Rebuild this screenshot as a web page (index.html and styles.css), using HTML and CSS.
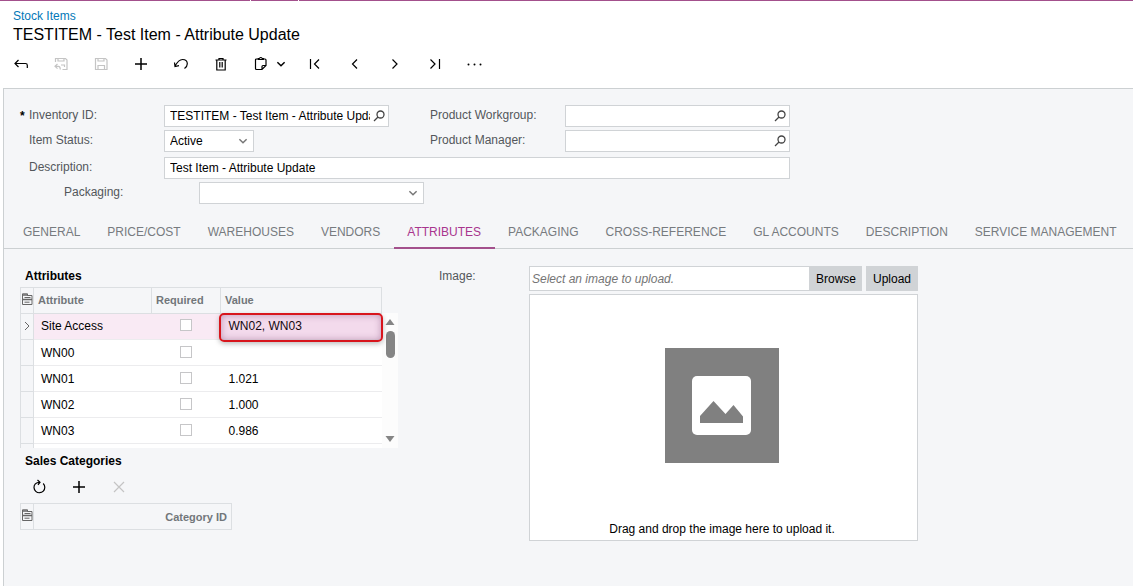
FILE: index.html
```html
<!DOCTYPE html>
<html lang="en">
<head>
  <meta charset="UTF-8" />
  <meta name="viewport" content="width=device-width, initial-scale=1.0" />
  <title>Stock Items</title>
  <link rel="stylesheet" href="styles.css">
</head>
<body>

<!-- shared icons -->
<svg class="sprite" aria-hidden="true">
  <symbol id="lookup" viewBox="0 0 12 12"><circle cx="7.500" cy="4.500" r="3.500" /><path d="M5 7L1 11" /></symbol>
  <symbol id="down" viewBox="0 0 10 10"><path d="M2 3.500l3 3 3-3" /></symbol>
  <symbol id="plus" viewBox="0 0 16 16"><path d="M8 2v12M2 8h12" /></symbol>
  <symbol id="settings" viewBox="0 0 12 12"><path d="M1.500 11.500V.8h5v1.700h4.500v9z" /><path stroke-width="1.600" d="M1.500 2h5.500M2 6.500h9" /><path d="M3.500 4.500h6M3.500 9.200h5" /></symbol>
</svg>

<div class="top-bar"><span></span><span></span><span></span></div>

<header>
  <a class="crumb" href="#">Stock Items</a>
  <h1>TESTITEM - Test Item - Attribute Update</h1>
  <div class="toolbar">
    <button class="tool" aria-label="Back"><svg viewBox="0 0 16 16"><path d="M5.500 4L2 7.500 5.500 11M2 7.500h10.500q1.800 0 1.800 1.800V12" /></svg></button>
    <button class="tool" aria-label="Save and close" disabled><svg viewBox="0 0 16 16"><path d="M2.500 6V2.500h10L14 4v9.500H9.500M5 2.500V5h6V2.500M8 9h3.500v2M4.500 8L2 10.300l2.500 2.300M2 10.300h3.500q1.800 0 1.800 3.200" /></svg></button>
    <button class="tool" aria-label="Save" disabled><svg viewBox="0 0 16 16"><path d="M2.500 2.500h10L14 4v9.500H2.500zM5 2.500V5h6V2.500M5 13.500v-4h6.500v4" /></svg></button>
    <button class="tool add" aria-label="Add"><svg viewBox="0 0 16 16"><use href="#plus" /></svg></button>
    <button class="tool" aria-label="Undo"><svg viewBox="0 0 16 16"><path d="M1.500 6.500l.5 4 4-.8M2 10.300C4 6.500 6.500 3.500 9.500 3.500c3 0 4.800 2 4.800 4.300 0 2-1 3.500-2.800 4.700" /></svg></button>
    <button class="tool" aria-label="Delete"><svg viewBox="0 0 16 16"><path d="M2.500 4h11M6 4V2.500h4V4M3.800 4v10h8.400V4M6.800 6v5.500M9.200 6v5.500" /></svg></button>
    <button class="tool" aria-label="Clipboard"><svg viewBox="0 0 16 16"><path d="M5 3H3.500q-1 0-1 1v8.500q0 1 1 1H9l4-4V4q0-1-1-1h-1.500M5.300 3.500V2.500h1q1.500-2 3 0h1v1zM9 13.500v-3q0-1 1-1h3" /></svg></button>
    <button class="tool narrow" aria-label="Clipboard menu"><svg viewBox="0 0 10 10"><use href="#down" /></svg></button>
    <button class="tool" aria-label="First"><svg viewBox="0 0 16 16"><path d="M3.500 3v10M12 3.500L7.500 8l4.500 4.500" /></svg></button>
    <button class="tool" aria-label="Previous"><svg viewBox="0 0 16 16"><path d="M10 3.500L5.500 8l4.500 4.500" /></svg></button>
    <button class="tool" aria-label="Next"><svg viewBox="0 0 16 16"><path d="M5.500 3.500L10 8l-4.500 4.500" /></svg></button>
    <button class="tool" aria-label="Last"><svg viewBox="0 0 16 16"><path d="M3.500 3.500L8 8l-4.500 4.500M12.500 3v10" /></svg></button>
    <button class="tool" aria-label="More"><svg class="dots" viewBox="0 0 16 16"><circle cx="1.500" cy="8.500" r="1" /><circle cx="7.500" cy="8.500" r="1" /><circle cx="13.500" cy="8.500" r="1" /></svg></button>
  </div>
</header>

<main>
  <form class="summary">
    <label class="required" for="inventory">Inventory ID:</label>
    <div class="field">
      <input id="inventory" type="text" value="TESTITEM - Test Item - Attribute Update">
      <svg class="lookup"><use href="#lookup" /></svg>
    </div>
    <label class="second" for="workgroup">Product Workgroup:</label>
    <div class="field">
      <input id="workgroup" type="text">
      <svg class="lookup"><use href="#lookup" /></svg>
    </div>

    <label for="status">Item Status:</label>
    <div class="field short">
      <select id="status"><option>Active</option></select>
      <svg class="arrow"><use href="#down" /></svg>
    </div>
    <label class="second" for="manager">Product Manager:</label>
    <div class="field">
      <input id="manager" type="text">
      <svg class="lookup"><use href="#lookup" /></svg>
    </div>

    <label class="spaced" for="description">Description:</label>
    <div class="field wide spaced">
      <input id="description" type="text" value="Test Item - Attribute Update">
    </div>

    <div class="packaging">
      <label for="packaging">Packaging:</label>
      <div class="field">
        <select id="packaging"><option></option></select>
        <svg class="arrow"><use href="#down" /></svg>
      </div>
    </div>
  </form>

  <nav class="tabs">
    <a href="#">GENERAL</a>
    <a href="#">PRICE/COST</a>
    <a href="#">WAREHOUSES</a>
    <a href="#">VENDORS</a>
    <a href="#" class="active">ATTRIBUTES</a>
    <a href="#">PACKAGING</a>
    <a href="#">CROSS-REFERENCE</a>
    <a href="#">GL ACCOUNTS</a>
    <a href="#">DESCRIPTION</a>
    <a href="#">SERVICE MANAGEMENT</a>
  </nav>

  <div class="content">
    <section class="left">
      <h2>Attributes</h2>
      <div class="grid-box">
        <table class="grid">
          <colgroup><col class="c-sel"><col class="c-attr"><col class="c-req"><col class="c-val"></colgroup>
          <thead>
            <tr><th><svg class="settings"><use href="#settings" /></svg></th><th>Attribute</th><th>Required</th><th>Value</th></tr>
          </thead>
          <tbody>
            <tr class="selected">
              <td><svg class="current" viewBox="0 0 12 12"><path d="M4 2l4 4-4 4" /></svg></td>
              <td>Site Access</td>
              <td><input type="checkbox" aria-label="Site Access required"></td>
              <td class="marked">WN02, WN03</td>
            </tr>
            <tr><td></td><td>WN00</td><td><input type="checkbox" aria-label="WN00 required"></td><td></td></tr>
            <tr><td></td><td>WN01</td><td><input type="checkbox" aria-label="WN01 required"></td><td>1.021</td></tr>
            <tr><td></td><td>WN02</td><td><input type="checkbox" aria-label="WN02 required"></td><td>1.000</td></tr>
            <tr><td></td><td>WN03</td><td><input type="checkbox" aria-label="WN03 required"></td><td>0.986</td></tr>
            <tr><td></td><td></td><td></td><td></td></tr>
          </tbody>
        </table>
        <div class="scrollbar">
          <svg viewBox="0 0 10 8"><path d="M5 1l4.500 6h-9z" /></svg>
          <div class="thumb"></div>
          <svg viewBox="0 0 10 8"><path d="M5 7L.5 1h9z" /></svg>
        </div>
      </div>

      <h2>Sales Categories</h2>
      <div class="toolbar small">
        <button class="tool" aria-label="Refresh"><svg viewBox="0 0 16 16"><path d="M12.200 4.500A5.400 5.400 0 1 1 4.300 4.800Q5.800 3.300 8.800 3.300M6.500 1l2.500 2.300L7 5.800" /></svg></button>
        <button class="tool add" aria-label="Add category"><svg viewBox="0 0 16 16"><use href="#plus" /></svg></button>
        <button class="tool" aria-label="Remove category" disabled><svg viewBox="0 0 16 16"><path d="M3 3l10 10M13 3L3 13" /></svg></button>
      </div>
      <table class="grid categories">
        <colgroup><col class="c-sel"><col></colgroup>
        <thead>
          <tr><th><svg class="settings"><use href="#settings" /></svg></th><th>Category ID</th></tr>
        </thead>
      </table>
    </section>

    <section class="right">
      <label for="image">Image:</label>
      <div class="uploader">
        <div class="upload-row">
          <input id="image" type="text" placeholder="Select an image to upload.">
          <button class="btn">Browse</button>
          <button class="btn upload">Upload</button>
        </div>
        <div class="drop-area">
          <svg class="placeholder" viewBox="0 0 114 115">
            <rect width="114" height="115" fill="#808080" />
            <rect x="27" y="28" width="59" height="59" rx="5" fill="#fff" />
            <path d="M35 75V68L48.500 53 60.500 66 68.500 57 78 68.500V75z" fill="#808080" />
          </svg>
          <p>Drag and drop the image here to upload it.</p>
        </div>
      </div>
    </section>
  </div>
</main>

</body>
</html>
```
FILE: styles.css
```css
* {
  box-sizing: border-box;
}

body {
  margin: 0;
  min-height: 100vh;
  display: flex;
  flex-direction: column;
  background: #fff;
  color: #000;
  font-family: "Liberation Sans", Arial, sans-serif;
  font-size: 12px;
  line-height: 16px;
}

svg {
  fill: none;
  stroke: currentColor;
  flex: none;
}

button,
input,
select {
  font: inherit;
  color: inherit;
  margin: 0;
  border: none;
  background: none;
}

.sprite {
  display: none;
}

.top-bar {
  display: flex;
  gap: 1px;
  height: 1px;
}

.top-bar span {
  background: #a3508c;
  width: 47px;
}

.top-bar span:first-child {
  width: 250px;
}

.top-bar span:last-child {
  flex: 1;
}

header {
  padding: 7px 0 12px 13px;
}

.crumb {
  display: block;
  color: #0278b8;
  text-decoration: none;
}

h1 {
  margin: 1px 0 0;
  font-size: 16px;
  line-height: 20px;
  font-weight: normal;
}

.toolbar {
  display: flex;
  align-items: center;
  margin: 6px 0 0 -12px;
}

.tool {
  width: 40px;
  height: 25px;
  padding: 0;
  display: flex;
  align-items: center;
  justify-content: center;
  cursor: pointer;
}

.tool svg {
  width: 16px;
  height: 16px;
  stroke-width: 1.2;
}

.tool.add svg {
  stroke-width: 1.5;
}

.tool:disabled {
  color: #c4c4c4;
}

.tool.narrow {
  width: 14px;
  margin: 0 7px 0 -7px;
}

.tool.narrow svg {
  width: 12px;
  height: 12px;
}

.tool .dots {
  fill: #000;
  stroke: none;
}

main {
  flex: 1;
  margin-left: 3px;
  border: solid #ccd0d2;
  border-width: 1px 0 0 1px;
  background: #f5f6f8;
}

/* summary form */
.summary {
  display: grid;
  grid-template-columns: 144px 225px 176px 225px;
  row-gap: 3px;
  padding: 16px;
}

.summary label {
  padding-left: 9px;
  line-height: 20px;
}

label {
  color: #53575b;
}

.summary .second {
  padding-left: 41px;
}

.required {
  position: relative;
}

.required::before {
  content: "*";
  position: absolute;
  left: 0;
  top: 1px;
  color: #000;
  font-weight: bold;
}

.field {
  display: flex;
  align-items: center;
  height: 22px;
  padding: 0 3px 0 5px;
  border: 1px solid #d0d3d6;
  background: #fff;
}

.field input {
  flex: 1;
  min-width: 0;
  padding: 0;
}

.field select {
  flex: 1;
  padding: 0;
  appearance: none;
}

.field.short {
  width: 90px;
}

.field.wide {
  grid-column: span 3;
}

.spaced {
  margin-top: 2px;
}

.lookup {
  width: 12px;
  height: 12px;
  margin-left: 3px;
  color: #444;
  stroke-width: 1.3;
}

.arrow {
  width: 12px;
  height: 12px;
  margin-right: 1px;
  color: #777;
  stroke-width: 1.2;
}

.packaging {
  grid-column: span 4;
  display: grid;
  grid-template-columns: 144px 225px;
  padding-left: 35px;
}

/* tabs */
.tabs {
  display: flex;
  padding-left: 6px;
  border-bottom: 1px solid #ccd0d2;
}

.tabs a {
  padding: 4px 14px 7px 13px;
  margin-bottom: -1px;
  border-bottom: 2px solid transparent;
  color: #777b7f;
  text-decoration: none;
  white-space: nowrap;
}

.tabs .active {
  color: #a8358d;
  border-color: #a3508c;
}

.content {
  display: flex;
  padding: 17px 16px;
}

.left {
  width: 419px;
}

h2 {
  margin: 0;
  padding: 2px 5px 3px;
  font-size: 12px;
  line-height: 16px;
}

/* grids */
.grid-box {
  display: flex;
  height: 161px;
  margin-bottom: 3px;
  overflow: hidden;
}

.grid {
  width: 362px;
  flex: none;
  height: 0;
  table-layout: fixed;
  border-collapse: collapse;
}

.c-sel {
  width: 13px;
}

.c-attr {
  width: 118px;
}

.c-req {
  width: 69px;
}

.grid th {
  height: 26px;
  padding: 0 4px 2px;
  border: 1px solid #dcdfe2;
  color: #72767a;
  font-size: 11px;
  text-align: left;
}

.grid th:first-child,
.grid td:first-child {
  padding: 0 0 4px;
  border: 1px solid #dcdfe2;
  background: #f5f6f8;
}

.grid td {
  height: 26px;
  padding: 0 8px;
  border-bottom: 1px solid #ececee;
  background: #fff;
}

.grid td:nth-child(2) {
  padding-left: 7px;
}

.grid td:nth-child(3) {
  text-align: center;
}

.grid .selected td {
  padding-bottom: 2px;
}

.grid .selected td + td {
  background: #f9eaf4;
}

.grid input {
  display: block;
  width: 12px;
  height: 12px;
  margin: 0 auto 2px;
  appearance: none;
  border: 1px solid #c6c6c8;
  background: #fff;
}

.settings,
.current {
  display: block;
  width: 12px;
  height: 12px;
  color: #666;
}

.grid .marked {
  position: relative;
}

.marked::after {
  content: "";
  position: absolute;
  inset: -1px -1px -3px -2px;
  border: 2px solid #d8151c;
  border-radius: 5px;
  background: rgba(200, 80, 170, 0.1);
  box-shadow: inset 0 0 7px rgba(110, 50, 100, 0.4), 0 2px 5px rgba(0, 0, 0, 0.25);
}

.scrollbar {
  display: flex;
  flex-direction: column;
  align-items: center;
  width: 16px;
  margin-top: 26px;
  padding: 5px 0;
  background: #fcfcfc;
}

.scrollbar svg {
  width: 10px;
  height: 8px;
  fill: #858585;
  stroke: none;
}

.thumb {
  width: 9px;
  height: 27px;
  margin: 5px 0 auto;
  border-radius: 5px;
  background: #858585;
}

.toolbar.small {
  margin: 2px 0 4px -1px;
}

.categories {
  width: 212px;
}

.categories th:last-child {
  padding-bottom: 0;
  text-align: right;
}

/* image upload */
.right {
  flex: 1;
  display: flex;
}

.right > label {
  width: 90px;
  padding-top: 2px;
}

.uploader {
  width: 389px;
}

.upload-row {
  display: flex;
  height: 25px;
  margin-bottom: 3px;
}

.upload-row input {
  flex: 1;
  min-width: 0;
  padding: 0 2px;
  border: 1px solid #d0d3d6;
  background: #fff;
}

.upload-row input::placeholder {
  color: #757575;
  font-style: italic;
}

.btn {
  width: 52px;
  padding: 0;
  background: #d0d3d6;
  cursor: pointer;
}

.upload {
  margin-left: 4px;
}

.drop-area {
  display: flex;
  flex-direction: column;
  align-items: center;
  padding: 53px 3px 3px 0;
  border: 1px solid #d0d3d6;
  background: #fff;
}

.placeholder {
  width: 114px;
  height: 115px;
  stroke: none;
}

.drop-area p {
  margin: 58px 0 0;
}
```
